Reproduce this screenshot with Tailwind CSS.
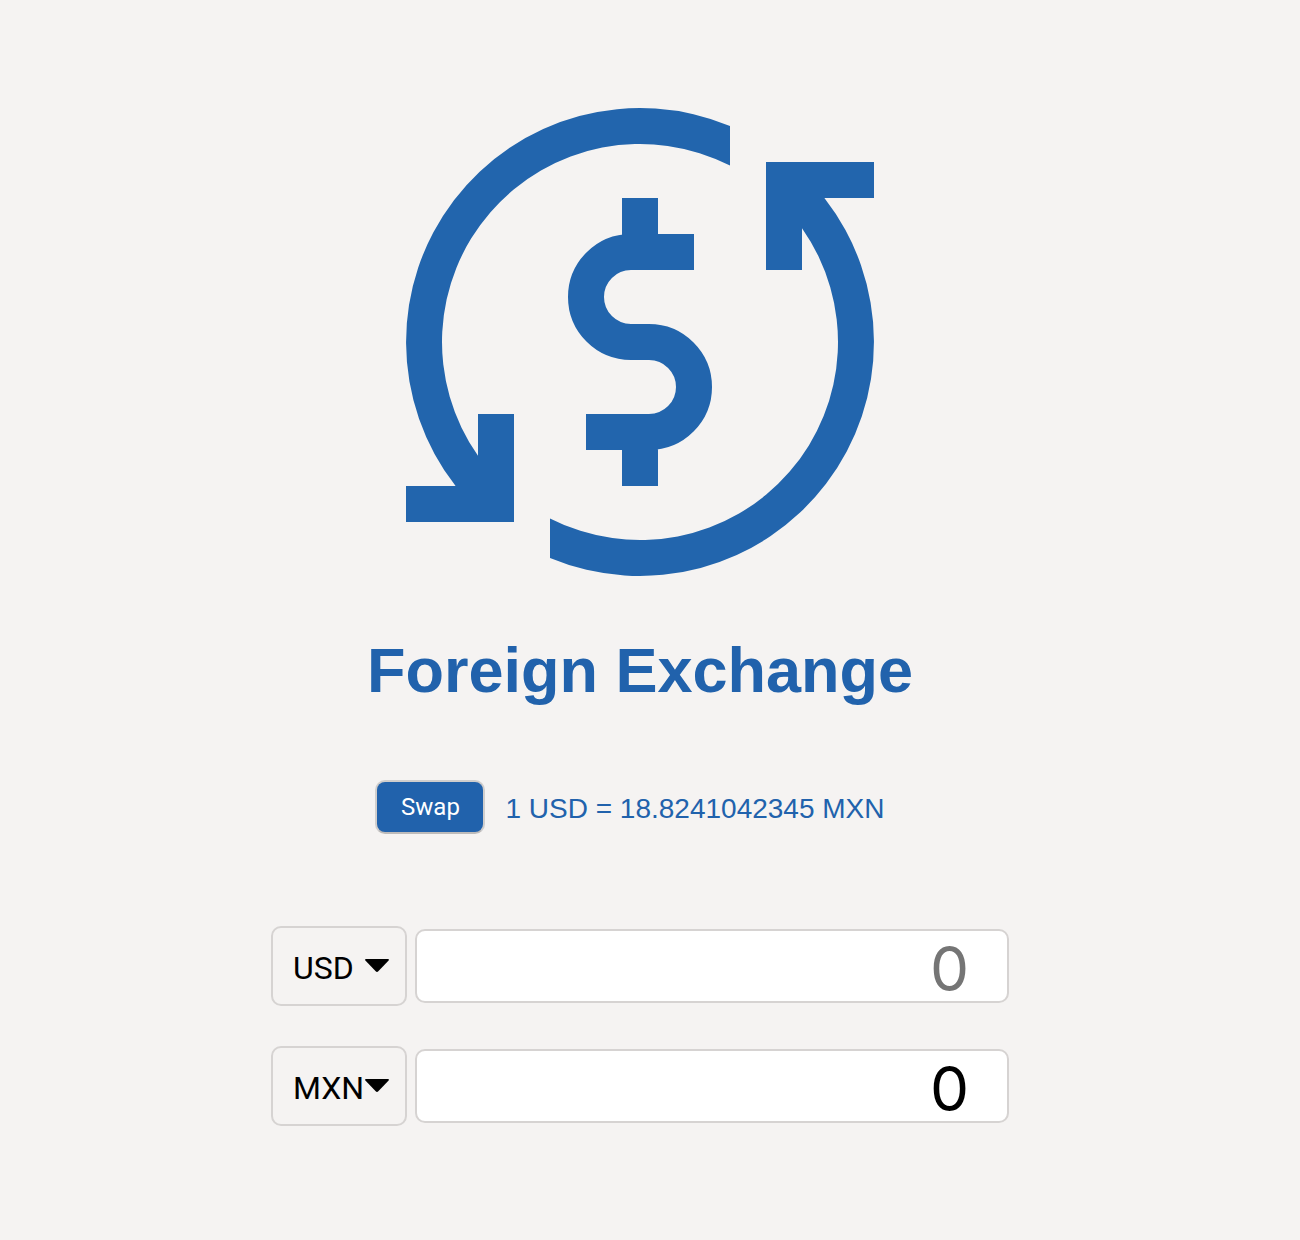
<!DOCTYPE html>
<html lang="en">
<head>
<meta charset="utf-8">
<meta name="viewport" content="width=device-width, initial-scale=1">
<title>Foreign Exchange</title>
<script src="https://cdn.jsdelivr.net/npm/@tailwindcss/browser@4"></script>
</head>
<body class="min-h-screen bg-[#f5f3f2] font-['Liberation_Sans',Arial,sans-serif] text-[#2162ac]">
<main class="flex flex-col items-center pt-27 pr-5 pb-28">
  <svg class="size-[468px] max-w-full" viewBox="-234 -234 468 468" fill="#2265ad" aria-hidden="true">
    <path d="M90-216A234 234 0 0 0-184.4 144H-234V180H-126V72H-162V113.8A198 198 0 0 1 90-176.4Z"/>
    <path transform="rotate(180)" d="M90-216A234 234 0 0 0-184.4 144H-234V180H-126V72H-162V113.8A198 198 0 0 1 90-176.4Z"/>
    <path fill="none" stroke="#2265ad" stroke-width="36" d="M54-90H-9A45 45 0 0 0-9 0H9A45 45 0 0 1 9 90H-54M0-144V-90M0 90V144"/>
  </svg>
  <h1 class="mt-14 text-center text-[63px] leading-[76px] font-bold">Foreign Exchange</h1>

  <div class="mt-18 flex items-center">
    <button type="button" class="h-[54px] w-[110px] rounded-[10px] border-2 border-[#d0cecd] border-b-[#bdbbba] bg-[#2162ac] font-['Roboto',sans-serif] text-2xl text-white">Swap</button>
    <p class="mx-5 pt-1 text-[28px] leading-10">1 USD = 18.8241042345 MXN</p>
  </div>

  <form class="mt-23 flex w-full max-w-[738px] flex-col gap-10 text-black">
    <div class="flex items-center gap-2">
      <div class="relative shrink-0">
        <select aria-label="Source currency" class="block h-20 w-34 appearance-none rounded-[10px] border-2 border-[#d6d3d2] bg-transparent pt-1 pl-5 font-['Roboto',sans-serif] text-[32px]">
          <option selected>USD</option><option>MXN</option>
        </select>
        <svg class="pointer-events-none absolute top-8 right-4 h-4 w-7" viewBox="0 0 28 16" aria-hidden="true"><path d="M3.2 1H24.8Q27 1 25.4 2.8L15.3 13.3Q14 14.6 12.7 13.3L2.6 2.8Q1 1 3.2 1Z"/></svg>
      </div>
      <input type="text" aria-label="Source amount" placeholder="0" class="h-[74px] min-w-0 flex-1 rounded-[10px] border-2 border-[#d6d3d2] bg-white px-[38px] pt-1 text-right font-['Inter',sans-serif] text-[62px] placeholder:text-[#757575]">
    </div>
    <div class="flex items-center gap-2">
      <div class="relative shrink-0">
        <select aria-label="Target currency" class="block h-20 w-34 appearance-none rounded-[10px] border-2 border-[#d6d3d2] bg-transparent pt-1 pl-5 font-['Roboto',sans-serif] text-[32px]">
          <option>USD</option><option selected>MXN</option>
        </select>
        <svg class="pointer-events-none absolute top-8 right-4 h-4 w-7" viewBox="0 0 28 16" aria-hidden="true"><path d="M3.2 1H24.8Q27 1 25.4 2.8L15.3 13.3Q14 14.6 12.7 13.3L2.6 2.8Q1 1 3.2 1Z"/></svg>
      </div>
      <input type="text" aria-label="Target amount" value="0" readonly class="h-[74px] min-w-0 flex-1 rounded-[10px] border-2 border-[#d6d3d2] bg-white px-[38px] pt-1 text-right font-['Inter',sans-serif] text-[62px]">
    </div>
  </form>
</main>
</body>
</html>
